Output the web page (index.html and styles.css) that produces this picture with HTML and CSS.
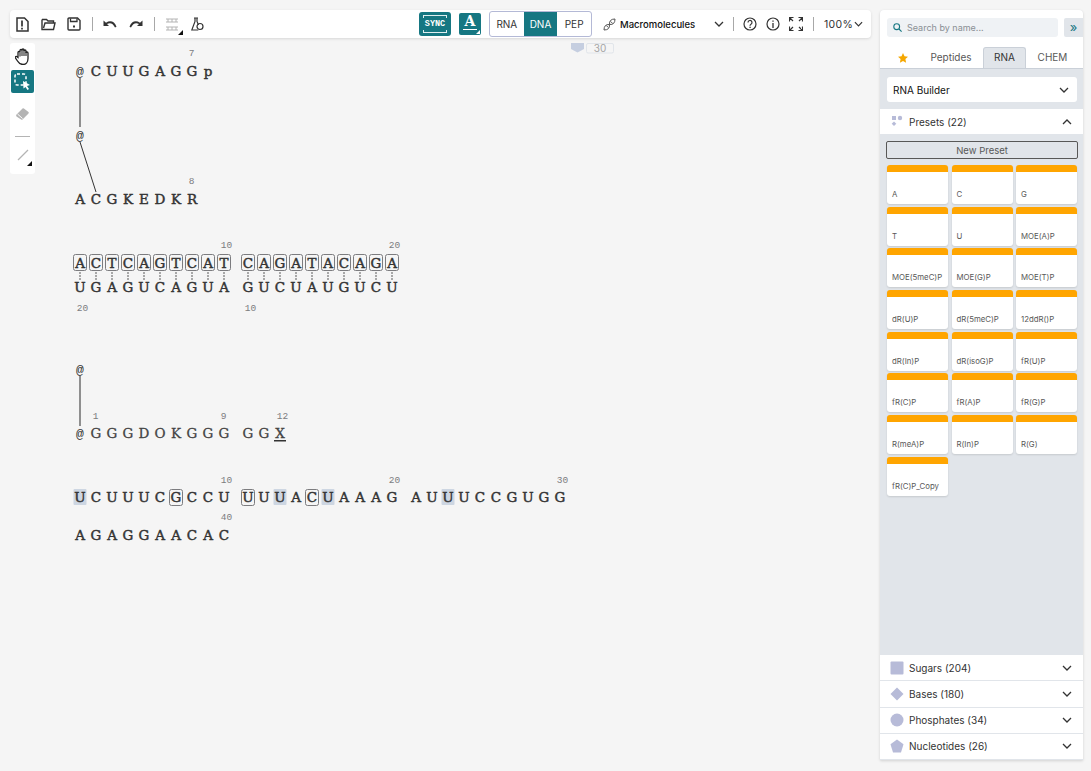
FILE: index.html

```html
<!DOCTYPE html>
<html lang="en">
<head>
  <meta charset="UTF-8" />
  <title>Macromolecules editor</title>
  <link rel="stylesheet" href="styles.css">
</head>
<body>

  <!-- sequence canvas, everything in page coordinates -->
  <svg class="canvas" width="871" height="771" viewBox="0 0 871 771">
    <g class="comment">
      <path d="M571 43h13v6l-6.500 3.500l-6.500-3.500z" fill="#c5cee0"/>
      <rect x="586.500" y="43.500" width="27" height="9.500" rx="1.500" fill="#f5f5f5" stroke="#e1e5ea"/>
      <text class="comment-num" x="600" y="52">30</text>
    </g>

    <g class="bonds">
      <line x1="80" y1="78" x2="80" y2="127" class="bond-r"/>
      <line x1="80" y1="142" x2="96" y2="192" class="bond-s"/>
      <line x1="80" y1="376" x2="80" y2="426" class="bond-r"/>
    </g>

    <g class="hl">
      <rect x="73.500" y="489" width="13" height="16" rx="1"/>
      <rect x="273.500" y="489" width="13" height="16" rx="1"/>
      <rect x="321.500" y="489" width="13" height="16" rx="1"/>
      <rect x="441.500" y="489" width="13" height="16" rx="1"/>
    </g>

    <g class="boxes">
      <rect x="73.500" y="254.500" width="13" height="16" rx="2"/><rect x="89.500" y="254.500" width="13" height="16" rx="2"/>
      <rect x="105.500" y="254.500" width="13" height="16" rx="2"/><rect x="121.500" y="254.500" width="13" height="16" rx="2"/>
      <rect x="137.500" y="254.500" width="13" height="16" rx="2"/><rect x="153.500" y="254.500" width="13" height="16" rx="2"/>
      <rect x="169.500" y="254.500" width="13" height="16" rx="2"/><rect x="185.500" y="254.500" width="13" height="16" rx="2"/>
      <rect x="201.500" y="254.500" width="13" height="16" rx="2"/><rect x="217.500" y="254.500" width="13" height="16" rx="2"/>
      <rect x="241.500" y="254.500" width="13" height="16" rx="2"/><rect x="257.500" y="254.500" width="13" height="16" rx="2"/>
      <rect x="273.500" y="254.500" width="13" height="16" rx="2"/><rect x="289.500" y="254.500" width="13" height="16" rx="2"/>
      <rect x="305.500" y="254.500" width="13" height="16" rx="2"/><rect x="321.500" y="254.500" width="13" height="16" rx="2"/>
      <rect x="337.500" y="254.500" width="13" height="16" rx="2"/><rect x="353.500" y="254.500" width="13" height="16" rx="2"/>
      <rect x="369.500" y="254.500" width="13" height="16" rx="2"/><rect x="385.500" y="254.500" width="13" height="16" rx="2"/>
      <rect x="169.500" y="489.500" width="13" height="16" rx="2"/>
      <rect x="241.500" y="489.500" width="13" height="16" rx="2"/>
      <rect x="305.500" y="489.500" width="13" height="16" rx="2"/>
    </g>

    <path class="hbonds" d="M80 272v8M96 272v8M112 272v8M128 272v8M144 272v8M160 272v8M176 272v8M192 272v8M208 272v8M224 272v8M248 272v8M264 272v8M280 272v8M296 272v8M312 272v8M328 272v8M344 272v8M360 272v8M376 272v8M392 272v8"/>

    <g class="seq">
      <text class="at" x="80" y="76">@</text>
      <text x="96 112 128 144 160 176 192 208" y="76">CUUGAGGp</text>
      <text class="at" x="80" y="140">@</text>
      <text x="80 96 112 128 144 160 176 192" y="204">ACGKEDKR</text>
      <text x="80 96 112 128 144 160 176 192 208 224 248 264 280 296 312 328 344 360 376 392" y="268">ACTCAGTCATCAGATACAGA</text>
      <text x="80 96 112 128 144 160 176 192 208 224 248 264 280 296 312 328 344 360 376 392" y="292">UGAGUCAGUAGUCUAUGUCU</text>
      <text class="at" x="80" y="374">@</text>
      <text class="at" x="80" y="438">@</text>
      <text class="pep" x="96 112 128 144 160 176 192 208 224 248 264 280" y="438">GGGDOKGGGGGX</text>
      <text x="80 96 112 128 144 160 176 192 208 224 248 264 280 296 312 328 344 360 376 392 416 432 448 464 480 496 512 528 544 560" y="502">UCUUUCGCCUUUUACUAAAGAUUUCCGUGG</text>
      <text x="80 96 112 128 144 160 176 192 208 224" y="540">AGAGGAACAC</text>
    </g>
    <rect x="274" y="440" width="12" height="1.500" fill="#333"/>

    <g class="nums">
      <text x="191.500" y="56">7</text>
      <text x="191.500" y="184">8</text>
      <text x="226.500" y="248">10</text>
      <text x="394.500" y="248">20</text>
      <text x="82.500" y="311">20</text>
      <text x="250.500" y="311">10</text>
      <text x="95.500" y="419">1</text>
      <text x="223.500" y="419">9</text>
      <text x="282.500" y="419">12</text>
      <text x="226.500" y="483">10</text>
      <text x="394.500" y="483">20</text>
      <text x="562.500" y="483">30</text>
      <text x="226.500" y="520">40</text>
    </g>
  </svg>

  <div class="app">
    <div class="editor">
      <div class="topbar">
        <div class="tools">
          <button class="icon-btn">
            <svg width="13" height="15" viewBox="0 0 13 15"><path d="M1 1h7.500l3.500 3.500v9.500h-11z" fill="none" stroke="#333" stroke-width="1.500"/><path d="M6 3.500v6M6 10.800v1.700" stroke="#333" stroke-width="1.700"/></svg>
          </button>
          <button class="icon-btn">
            <svg width="15" height="13" viewBox="0 0 15 13"><path d="M1 1.500h4.500l1.500 1.500h5.500v2M1 1.500v10h11.500l1.500-6.500h-10l-1.500 5" fill="none" stroke="#333" stroke-width="1.400"/></svg>
          </button>
          <button class="icon-btn">
            <svg width="14" height="14" viewBox="0 0 14 14"><path d="M1 2a1 1 0 0 1 1-1h8.500l2.500 2.500v8.500a1 1 0 0 1-1 1h-10a1 1 0 0 1-1-1z" fill="none" stroke="#333" stroke-width="1.400"/><path d="M3.500 1.500v3h6.500v-3" fill="none" stroke="#333" stroke-width="1.300"/><rect x="6" y="8.500" width="2" height="2" fill="#333"/></svg>
          </button>
          <span class="divider"></span>
          <button class="icon-btn">
            <svg width="14" height="9" viewBox="0 0 14 9"><path d="M0.500 0.500v5.500h5.500l-2-2c3-1.800 6-.8 8 3.500l1.500-.7c-2-5.500-6.300-6.800-10.500-4z" fill="#333"/></svg>
          </button>
          <button class="icon-btn">
            <svg width="14" height="9" viewBox="0 0 14 9"><path d="M13.500 0.500v5.500h-5.500l2-2c-3-1.800-6-.8-8 3.500l-1.500-.7c2-5.500 6.300-6.800 10.500-4z" fill="#333"/></svg>
          </button>
          <span class="divider"></span>
          <button class="icon-btn has-corner">
            <svg width="14" height="14" viewBox="0 0 14 14"><path d="M1 2h12M1 5h12M1 10h12M1 13h12M3 2v3M7 2v3M11 2v3M3 10v3M7 10v3M11 10v3" stroke="#b4b4b4" fill="none"/></svg>
          </button>
          <button class="icon-btn">
            <svg width="13" height="14" viewBox="0 0 13 14"><path d="M3 1h4M4 1v3.500l-3.200 8.500h6.500M6 1v3.500l1.500 3.500" fill="none" stroke="#333" stroke-width="1.200"/><circle cx="9" cy="9.500" r="3" fill="none" stroke="#333" stroke-width="1.200"/></svg>
          </button>
        </div>

        <div class="tools">
          <div class="sync">
            <span class="sync-teeth"></span>
            <span class="sync-label">SYNC</span>
            <span class="sync-teeth"></span>
          </div>
          <div class="font-btn">
            <span class="font-a">A</span>
            <span class="font-bar"></span>
          </div>
          <div class="switch">
            <span>RNA</span>
            <span class="on">DNA</span>
            <span>PEP</span>
          </div>
          <div class="mode">
            <svg width="13" height="13" viewBox="0 0 13 13"><path d="M1 12Q1 6 6.500 6.500T12 1M1 12Q7 12 6.500 6.500T12 1" fill="none" stroke="#555" stroke-width="1"/><path d="M3.300 7.500l2 2M7.700 3.500l2 2" stroke="#555"/></svg>
            <span class="mode-label">Macromolecules</span>
            <svg class="chev" width="10" height="6" viewBox="0 0 10 6"><path d="M1 1l4 4 4-4" fill="none" stroke="#333" stroke-width="1.300"/></svg>
          </div>
          <span class="divider"></span>
          <button class="icon-btn icon-sm">
            <svg width="14" height="14" viewBox="0 0 14 14"><circle cx="7" cy="7" r="6" fill="none" stroke="#333" stroke-width="1.200"/><path d="M5 5.500a2 2 0 1 1 3 1.700c-.7.400-1 .8-1 1.600" fill="none" stroke="#333" stroke-width="1.200"/><rect x="6.400" y="9.700" width="1.300" height="1.300" fill="#333"/></svg>
          </button>
          <button class="icon-btn icon-sm">
            <svg width="14" height="14" viewBox="0 0 14 14"><circle cx="7" cy="7" r="6" fill="none" stroke="#333" stroke-width="1.200"/><path d="M7 6v5M7 3.500v1.300" stroke="#333" stroke-width="1.300"/></svg>
          </button>
          <button class="icon-btn icon-sm">
            <svg width="14" height="14" viewBox="0 0 14 14"><path d="M0.500 4.500v-4h4M1 1l3 3M9.500 0.500h4v4M13 1l-3 3M0.500 9.500v4h4M1 13l3-3M9.500 13.500h4v-4M13 13l-3-3" fill="none" stroke="#333" stroke-width="1.200"/></svg>
          </button>
          <span class="divider"></span>
          <div class="zoom">
            <span>100%</span>
            <svg width="9" height="6" viewBox="0 0 10 6"><path d="M1 1l4 4 4-4" fill="none" stroke="#333" stroke-width="1.300"/></svg>
          </div>
        </div>
      </div>

      <div class="sidebar">
        <button class="side-btn">
          <svg width="16" height="17" viewBox="0 0 16 17"><path d="M3 9.500v-5a1 1 0 0 1 2 0v-2a1 1 0 0 1 2 0v-.500a1 1 0 0 1 2 0v1a1 1 0 0 1 2 0v2a1 1 0 0 1 2 0v5.500c0 3.500-2 6-5 6s-4-1-5.500-3.500l-2-3c-.7-1.200.8-2.300 1.800-1z" fill="#fff" stroke="#222" stroke-width="1.300"/><path d="M5 4.500v4M7 2v6M9 2v6M11 3.500v4.500" stroke="#222" stroke-width="1.100"/></svg>
        </button>
        <button class="side-btn side-on">
          <svg width="17" height="17" viewBox="0 0 17 17"><rect x="1" y="1" width="11" height="11" rx="2" fill="none" stroke="#fff" stroke-width="1.500" stroke-dasharray="3 2"/><path d="M9 8l7 4-3 1 2 3-1.500 1-2-3-2 1.500z" fill="#fff"/></svg>
        </button>
        <button class="side-btn side-erase">
          <svg width="15" height="14" viewBox="0 0 15 14"><path d="M1 8l6.500-6.500a1 1 0 0 1 1.400 0l4.600 3.500a1 1 0 0 1 0 1.400l-6 6a1 1 0 0 1-1.400 0l-4.600-3z" fill="#b4b4b4"/><path d="M2.500 7l5 4.500" stroke="#fff"/></svg>
        </button>
        <span class="side-line"></span>
        <button class="side-btn has-corner">
          <svg width="12" height="12" viewBox="0 0 12 12"><path d="M1 11L11 1" stroke="#b4b4b4" stroke-width="1.200"/></svg>
        </button>
      </div>
    </div>

    <aside class="library">
      <div class="lib-head">
        <div class="search-row">
          <div class="search">
            <svg width="9" height="9" viewBox="0 0 9 9"><circle cx="3.700" cy="3.700" r="2.900" fill="none" stroke="#167782" stroke-width="1.100"/><path d="M6 6l2.600 2.600" stroke="#167782" stroke-width="1.100"/></svg>
            <span>Search by name...</span>
          </div>
          <button class="collapse">»</button>
        </div>
        <div class="tabs">
          <span class="tab tab-star">
            <svg width="10" height="10" viewBox="0 0 10 10"><path d="M5 0l1.500 3.300 3.500.4-2.600 2.400.7 3.600L5 8 1.900 9.700l.7-3.600L0 3.700l3.500-.4z" fill="#f5a700"/></svg>
          </span>
          <span class="tab tab-pep">Peptides</span>
          <span class="tab tab-on">RNA</span>
          <span class="tab tab-chem">CHEM</span>
        </div>
      </div>

      <div class="builder">
        <span>RNA Builder</span>
        <svg width="10" height="6" viewBox="0 0 10 6"><path d="M1 1l4 4 4-4" fill="none" stroke="#333" stroke-width="1.300"/></svg>
      </div>

      <div class="acc acc-presets">
        <svg class="acc-icon" width="14" height="14" viewBox="0 0 14 14"><rect x="2" y="1" width="4" height="4" fill="#b7bbd8"/><circle cx="10" cy="3" r="2.200" fill="#b7bbd8"/><path d="M4 6.500l2.300 2.300L4 11.100 1.700 8.800z" fill="#b7bbd8"/></svg>
        <span>Presets (22)</span>
        <svg class="acc-chev" width="10" height="6" viewBox="0 0 10 6"><path d="M1 5l4-4 4 4" fill="none" stroke="#333" stroke-width="1.300"/></svg>
      </div>

      <div class="presets">
        <button class="new-preset">New Preset</button>
        <div class="preset-grid">
          <div class="card">A</div>
          <div class="card">C</div>
          <div class="card">G</div>
          <div class="card">T</div>
          <div class="card">U</div>
          <div class="card">MOE(A)P</div>
          <div class="card">MOE(5meC)P</div>
          <div class="card">MOE(G)P</div>
          <div class="card">MOE(T)P</div>
          <div class="card">dR(U)P</div>
          <div class="card">dR(5meC)P</div>
          <div class="card">12ddR()P</div>
          <div class="card">dR(In)P</div>
          <div class="card">dR(isoG)P</div>
          <div class="card">fR(U)P</div>
          <div class="card">fR(C)P</div>
          <div class="card">fR(A)P</div>
          <div class="card">fR(G)P</div>
          <div class="card">R(meA)P</div>
          <div class="card">R(In)P</div>
          <div class="card">R(G)</div>
          <div class="card">fR(C)P_Copy</div>
        </div>
      </div>

      <div class="acc">
        <svg class="acc-icon" width="14" height="14" viewBox="0 0 14 14"><rect x="0.500" y="0.500" width="13" height="13" rx="1" fill="#b7bbd8"/></svg>
        <span>Sugars (204)</span>
        <svg class="acc-chev" width="10" height="6" viewBox="0 0 10 6"><path d="M1 1l4 4 4-4" fill="none" stroke="#333" stroke-width="1.300"/></svg>
      </div>
      <div class="acc">
        <svg class="acc-icon" width="14" height="14" viewBox="0 0 14 14"><path d="M7 0.500l6.500 6.500-6.500 6.500L0.500 7z" fill="#b7bbd8"/></svg>
        <span>Bases (180)</span>
        <svg class="acc-chev" width="10" height="6" viewBox="0 0 10 6"><path d="M1 1l4 4 4-4" fill="none" stroke="#333" stroke-width="1.300"/></svg>
      </div>
      <div class="acc">
        <svg class="acc-icon" width="14" height="14" viewBox="0 0 14 14"><circle cx="7" cy="7" r="6.500" fill="#b7bbd8"/></svg>
        <span>Phosphates (34)</span>
        <svg class="acc-chev" width="10" height="6" viewBox="0 0 10 6"><path d="M1 1l4 4 4-4" fill="none" stroke="#333" stroke-width="1.300"/></svg>
      </div>
      <div class="acc">
        <svg class="acc-icon" width="14" height="14" viewBox="0 0 14 14"><path d="M7 0.500l6.500 4.700-2.500 8.300h-8L0.500 5.200z" fill="#b7bbd8"/></svg>
        <span>Nucleotides (26)</span>
        <svg class="acc-chev" width="10" height="6" viewBox="0 0 10 6"><path d="M1 1l4 4 4-4" fill="none" stroke="#333" stroke-width="1.300"/></svg>
      </div>
    </aside>
  </div>

</body>
</html>
```

FILE: styles.css

```css
* {
  box-sizing: border-box;
}

html, body {
  height: 100%;
}

body {
  margin: 0;
  background-color: #f5f5f5;
  font-family: 'Inter', sans-serif;
  color: #333;
  overflow: hidden;
}

button {
  font-family: inherit;
  border: none;
  background: none;
  padding: 0;
}

/* canvas */
.canvas {
  position: absolute;
  left: 0;
  top: 0;
}

.seq text {
  font-family: 'DejaVu Serif', serif;
  font-size: 13.500px;
  text-anchor: middle;
  fill: #333;
  stroke: #333;
  stroke-width: 0.450px;
}

.seq text.at {
  font-family: 'Liberation Mono', monospace;
  font-size: 13px;
  stroke: none;
}

.seq text.pep {
  fill: #444;
  stroke: #444;
  stroke-width: 0.300px;
}

.nums text {
  font-family: 'Liberation Mono', monospace;
  font-size: 9.500px;
  text-anchor: middle;
  fill: #7c7c7f;
}

.comment-num {
  font-family: 'Inter', sans-serif;
  font-size: 10px;
  text-anchor: middle;
  fill: #a5a5a5;
}

.bond-r {
  stroke: #8f8f8f;
  stroke-width: 2;
}

.bond-s {
  stroke: #333;
  stroke-width: 1;
}

.hl rect {
  fill: #cdd6e2;
}

.boxes rect {
  fill: none;
  stroke: #7c7c7f;
  stroke-width: 1;
}

.hbonds {
  fill: none;
  stroke: #8f8f8f;
  stroke-width: 1.500;
  stroke-dasharray: 2 1;
}

/* page layout */
.app {
  position: relative;
  display: flex;
  gap: 9px;
  height: 771px;
  padding: 10px 8px 11px 10px;
}

.editor {
  flex: 1;
  display: flex;
  flex-direction: column;
  align-items: flex-start;
  gap: 5px;
}

/* top toolbar */
.topbar {
  width: 100%;
  height: 28px;
  display: flex;
  justify-content: space-between;
  align-items: center;
  padding: 0 8px 0 0;
  background-color: white;
  border-radius: 4px;
  box-shadow: 0 1px 3px rgba(0,0,0,0.12);
}

.tools {
  display: flex;
  align-items: center;
}

.icon-btn {
  position: relative;
  width: 25.500px;
  height: 24px;
  display: flex;
  align-items: center;
  justify-content: center;
}

.icon-sm {
  width: 23px;
}

.has-corner::after {
  content: "";
  position: absolute;
  right: 2px;
  bottom: 1px;
  border-style: solid;
  border-width: 0 0 5px 5px;
  border-color: transparent transparent #111 transparent;
}

.divider {
  width: 1px;
  height: 14px;
  margin: 0 5px;
  background-color: #a8a8a8;
}

.sync {
  width: 32px;
  height: 24px;
  margin-right: 8px;
  display: flex;
  flex-direction: column;
  justify-content: space-between;
  align-items: center;
  padding: 3px 0;
  background-color: #167782;
  border-radius: 3px;
}

.sync-label {
  font-family: 'Liberation Mono', monospace;
  font-size: 8.500px;
  font-weight: bold;
  line-height: 8px;
  color: white;
}

.sync-teeth {
  width: 24px;
  height: 3px;
  border-top: 1px solid #dfeef0;
  border-left: 1px solid #dfeef0;
  border-right: 1px solid #dfeef0;
}

.sync-teeth:last-child {
  border-top: none;
  border-bottom: 1px solid #dfeef0;
}

.font-btn {
  position: relative;
  width: 22px;
  height: 22px;
  margin-right: 8px;
  display: flex;
  flex-direction: column;
  align-items: center;
  background-color: #167782;
  border-radius: 2px;
}

.font-a {
  font-family: 'DejaVu Serif', serif;
  font-size: 14px;
  font-weight: bold;
  line-height: 16px;
  color: white;
}

.font-bar {
  width: 14px;
  height: 1px;
  background-color: white;
}

.font-btn::after {
  content: "";
  position: absolute;
  right: 1px;
  bottom: 1px;
  border-style: solid;
  border-width: 0 0 4px 4px;
  border-color: transparent transparent white transparent;
}

.switch {
  height: 26px;
  display: flex;
  border: 1px solid #b4b9d6;
  border-radius: 3px;
  font-size: 10px;
  line-height: 24px;
}

.switch span {
  width: 33.670px;
  text-align: center;
}

.switch .on {
  background-color: #167782;
  color: white;
}

.mode {
  display: flex;
  align-items: center;
  width: 125px;
  margin-left: 11px;
}

.mode-label {
  margin-left: 4px;
  font-size: 9.500px;
  font-weight: 500;
  color: #111;
}

.chev {
  margin-left: auto;
  margin-right: 4px;
}

.zoom {
  display: flex;
  align-items: center;
  gap: 1px;
  margin-left: 5px;
  font-size: 10.500px;
  letter-spacing: 0.300px;
}

/* left toolbar */
.sidebar {
  width: 25px;
  display: flex;
  flex-direction: column;
  align-items: center;
  padding: 1px 0 5px;
  background-color: white;
  border-radius: 3px;
}

.side-btn {
  position: relative;
  width: 23px;
  height: 24px;
  display: flex;
  align-items: center;
  justify-content: center;
  margin-bottom: 2px;
}

.side-on {
  background-color: #167782;
  border-radius: 2px;
  height: 23px;
}

.side-erase {
  margin-top: 7px;
  margin-bottom: 10px;
}

.side-line {
  width: 15px;
  height: 1px;
  background-color: #b4b4b4;
  margin-bottom: 6px;
}

/* library panel */
.library {
  width: 203px;
  display: flex;
  flex-direction: column;
  background-color: #e1e5ea;
  border-radius: 4px 4px 0 0;
  box-shadow: 0 1px 3px rgba(0,0,0,0.15);
  font-size: 10px;
}

.lib-head {
  height: 59px;
  padding-top: 8px;
  background-color: white;
  border-radius: 4px 4px 0 0;
}

.search-row {
  display: flex;
  gap: 6px;
  padding-left: 7px;
}

.search {
  width: 171px;
  height: 19px;
  display: flex;
  align-items: center;
  gap: 5px;
  padding-left: 6px;
  background-color: #eff2f5;
  border-radius: 3px;
  color: #8a8f94;
  font-size: 9px;
}

.collapse {
  width: 19px;
  height: 19px;
  background-color: #e1e5ea;
  color: #167782;
  font-size: 13px;
  line-height: 15px;
  border-radius: 2px 0 0 2px;
}

.tabs {
  display: flex;
  align-items: flex-end;
  height: 21px;
  margin-top: 11px;
  border-bottom: 1px solid #cad0d8;
  font-size: 10px;
  color: #585858;
}

.tab {
  height: 21px;
  line-height: 21px;
  text-align: center;
}

.tab-star {
  width: 45px;
  display: flex;
  align-items: center;
  justify-content: center;
}

.tab-pep {
  width: 52px;
  margin-right: 6px;
}

.tab-on {
  width: 43px;
  background-color: #e1e5ea;
  border: 1px solid #cad0d8;
  border-bottom: none;
  border-radius: 3px 3px 0 0;
  line-height: 19px;
  color: #333;
}

.tab-chem {
  width: 53px;
}

.builder {
  height: 25px;
  margin: 8px 6px 7px 7px;
  display: flex;
  align-items: center;
  justify-content: space-between;
  padding: 0 8px 0 6px;
  background-color: white;
  border-radius: 3px;
  font-size: 10px;
  color: #111;
}

.acc {
  height: 26.250px;
  flex-shrink: 0;
  display: flex;
  align-items: center;
  padding: 0 11px 0 10px;
  background-color: white;
  border-bottom: 1px solid #e1e5ea;
  color: #333;
}

.acc-presets {
  height: 25px;
  border-bottom: none;
}

.acc-icon {
  margin-right: 5px;
}

.acc-chev {
  margin-left: auto;
}

.presets {
  flex: 1;
  padding: 7px 5px 0 6px;
}

.new-preset {
  display: block;
  width: 192px;
  height: 18px;
  margin-bottom: 6px;
  border: 1px solid #585858;
  border-radius: 2px;
  background-color: #e1e5ea;
  color: #585858;
  font-size: 9.500px;
}

.preset-grid {
  display: grid;
  grid-template-columns: repeat(3, 61px);
  grid-auto-rows: 39px;
  column-gap: 3.500px;
  row-gap: 2.700px;
  padding-left: 1px;
}

.card {
  display: flex;
  align-items: flex-end;
  padding: 0 5px 5px;
  background-color: white;
  border-top: 7px solid #ffa500;
  border-radius: 3px;
  box-shadow: 0 1px 2px rgba(0,0,0,0.12);
  font-size: 7.800px;
  color: #585858;
  white-space: nowrap;
}
```
